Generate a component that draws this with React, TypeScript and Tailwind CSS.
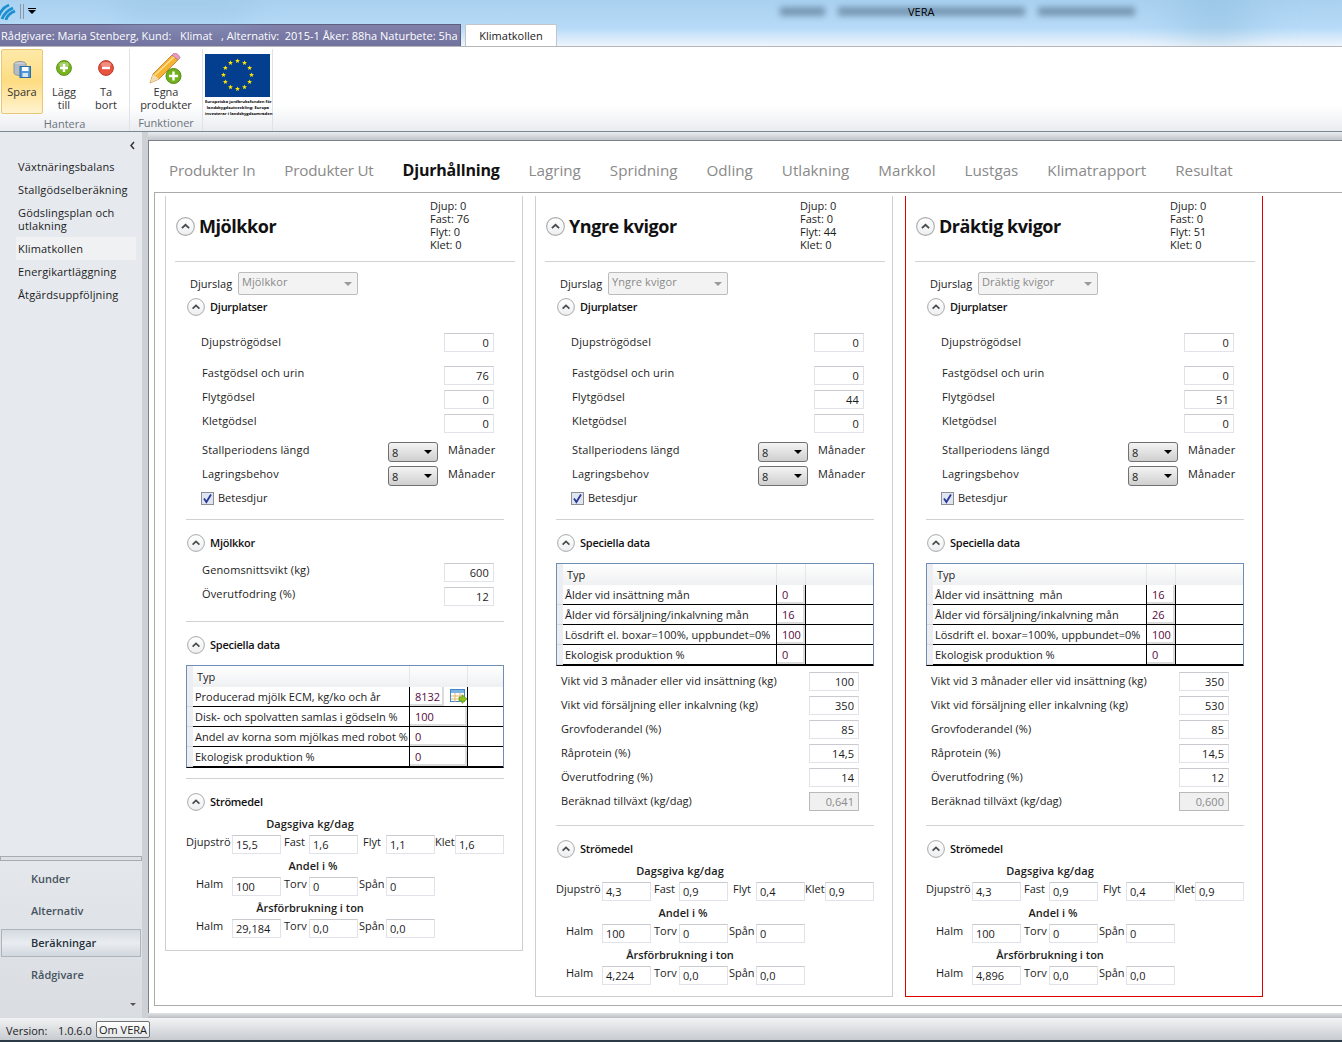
import type { ReactNode } from "react";

const Caret = ({ big = false }: { big?: boolean }) => (
  <svg width={big ? 19 : 18} height={big ? 19 : 18} viewBox="0 0 18 18" className="shrink-0">
    <defs>
      <linearGradient id="caretFill" x1="0" y1="0" x2="0" y2="1">
        <stop offset="0" stopColor="#ffffff" />
        <stop offset="1" stopColor="#eceef0" />
      </linearGradient>
    </defs>
    <circle cx="9" cy="9" r="8.4" fill="url(#caretFill)" stroke="#a9a9a9" strokeWidth="1" />
    <path d="M5.6 10.6 9 7.4l3.4 3.2" fill="none" stroke="#4a4a4a" strokeWidth="1.7" />
  </svg>
);

const Section = ({ title, className }: { title: string; className: string }) => (
  <div className={`flex items-center ml-[21px] h-[18px] ${className}`}>
    <Caret />
    <span className="ml-[5px] font-semibold text-[#111] tracking-[-0.25px]">{title}</span>
  </div>
);

const Line = ({ className }: { className: string }) => (
  <div className={`h-px ml-[20px] w-[318px] bg-[#d2d2d2] ${className}`}></div>
);

const NumBox = ({ value, disabled = false }: { value: string; disabled?: boolean }) => (
  <div
    className={
      disabled
        ? "w-[50px] h-[19px] shrink-0 pr-[4px] text-right leading-[17px] bg-[#f0f0f0] text-[#8a8a8a] border border-[#b9b9b9]"
        : "w-[50px] h-[19px] shrink-0 pr-[4px] text-right leading-[17px] bg-white border border-[#e2e3ea] border-t-[#c9cad0]"
    }
  >
    {value}
  </div>
);

const Field = ({ label, value, className, raised = false }: { label: string; value: string; className: string; raised?: boolean }) => (
  <div className={`flex items-center justify-between h-[19px] w-[293px] ml-[35px] tracking-[0.15px] ${className}`}>
    <span className={raised ? "mb-[4px] ml-px" : ""}>{label}</span>
    <NumBox value={value} />
  </div>
);

const Months = ({ label, className }: { label: string; className: string }) => (
  <div className={`flex items-center h-[20px] ml-[36px] tracking-[0.15px] ${className}`}>
    <span className="w-[186px] mb-[4px]">{label}</span>
    <div className="w-[50px] h-[20px] flex items-center justify-between pl-[3px] pr-[5px] rounded-[3px] border border-[#707070] bg-gradient-to-b from-[#f4f4f4] to-[#cfcfcf]">
      <span className="mt-[2px]">8</span>
      <span className="w-0 h-0 border-x-[4px] border-x-transparent border-t-[4px] border-t-black"></span>
    </div>
    <span className="ml-[10px] mb-[4px]">Månader</span>
  </div>
);

const Grid = () => (
  <svg width="17" height="15" viewBox="0 0 17 15" className="ml-[6px] shrink-0">
    <rect x="0.5" y="0.5" width="14" height="12" fill="#fff" stroke="#3f87c8" />
    <rect x="1" y="1" width="13" height="3" fill="#7db3e0" />
    <path d="M1 7h13M1 10h13M5 4v9M10 4v9" stroke="#e3b868" strokeWidth="1" />
    <path d="M9 8h3V5.6L17 10l-5 4.4V12H9z" fill="#8dc21f" stroke="#4f8a10" strokeWidth="0.6" />
  </svg>
);

type Row = { label: string; value: string; icon?: boolean };

const DataTable = ({ rows, col1, col2 }: { rows: Row[]; col1: string; col2: string }) => (
  <div className="mt-[11px] ml-[20px] w-[318px] h-[103px] border border-[#6f8db5] border-b-black">
    <div className="flex h-[21px] bg-gradient-to-b from-white to-[#eff0f2]">
      <div className="w-[6px] bg-[#eceef1]"></div>
      <div className={`${col1} pl-[4px] pt-[3px] border-r border-[#e4e6e8]`}>Typ</div>
      <div className={`${col2} border-r border-[#e4e6e8]`}></div>
    </div>
    {rows.map((r) => (
      <div key={r.label} className="flex h-[20px]">
        <div className="w-[6px] bg-[#eceef1] border-b border-[#d8d8d8]"></div>
        <div className={`${col1} pl-[2px] leading-[19px] whitespace-pre overflow-hidden border-r border-b border-black`}>{r.label}</div>
        <div className={`${col2} flex items-center border-r border-b border-black`}>
          <div className={`h-full pl-[5px] leading-[19px] text-[#560a3c] border-r-2 border-b-2 border-[#dcdcdc] ${r.icon ? "w-[34px]" : "w-full"}`}>
            {r.value}
          </div>
          {r.icon && <Grid />}
        </div>
        <div className="flex-1 border-b border-black"></div>
      </div>
    ))}
  </div>
);

const Box = ({ value }: { value: string }) => (
  <div className="w-[49px] h-[19px] shrink-0 pl-[3px] leading-[18px] bg-white border border-[#e2e3ea] border-t-[#c9cad0]">{value}</div>
);

const Lab = ({ text, className }: { text: string; className: string }) => (
  <span className={`h-[19px] leading-[13px] whitespace-nowrap shrink-0 ${className}`}>{text}</span>
);

const Stromedel = ({ day, share, ton }: { day: string[]; share: string[]; ton: string[] }) => (
  <div>
    <Section title="Strömedel" className="mt-[14px]" />
    <div className="mt-[5px] ml-[20px] w-[248px] h-[16px] leading-[16px] text-center font-semibold tracking-[0.1px]">Dagsgiva kg/dag</div>
    <div className="mt-[3px] ml-[20px] flex">
      <Lab text="Djupströ" className="w-[46px]" />
      <Box value={day[0]} />
      <Lab text="Fast" className="w-[28px] pl-[3px]" />
      <Box value={day[1]} />
      <Lab text="Flyt" className="w-[28px] pl-[5px]" />
      <Box value={day[2]} />
      <Lab text="Klet" className="w-[20px]" />
      <Box value={day[3]} />
    </div>
    <div className="mt-[4px] ml-[20px] w-[254px] h-[16px] leading-[16px] text-center font-semibold">Andel i %</div>
    <div className="mt-[3px] ml-[20px] flex">
      <Lab text="Halm" className="w-[46px] pl-[10px]" />
      <Box value={share[0]} />
      <Lab text="Torv" className="w-[28px] pl-[3px]" />
      <Box value={share[1]} />
      <Lab text="Spån" className="w-[28px] pl-[1px]" />
      <Box value={share[2]} />
    </div>
    <div className="mt-[4px] ml-[20px] w-[248px] h-[16px] leading-[16px] text-center font-semibold">Årsförbrukning i ton</div>
    <div className="mt-[3px] ml-[20px] flex">
      <Lab text="Halm" className="w-[46px] pl-[10px]" />
      <Box value={ton[0]} />
      <Lab text="Torv" className="w-[28px] pl-[3px]" />
      <Box value={ton[1]} />
      <Lab text="Spån" className="w-[28px] pl-[1px]" />
      <Box value={ton[2]} />
    </div>
  </div>
);

type CardProps = {
  title: string;
  stats: string[];
  places: string[];
  border: string;
  children: ReactNode;
};

const Card = ({ title, stats, places, border, children }: CardProps) => (
  <div className={`w-[358px] pb-[11px] border-x border-b ${border}`}>
    <div className="flex ml-[9px] w-[340px] h-[66px] border-b border-[#d2d2d2]">
      <div className="flex items-center mt-[20px] h-[20px] ml-px">
        <Caret big />
        <span className="ml-[4px] text-[18px] font-bold text-[#111] tracking-[-0.45px]">{title}</span>
      </div>
      <div className="ml-auto w-[85px] mt-[3px] leading-[13px]">
        {stats.map((s) => (
          <div key={s}>{s}</div>
        ))}
      </div>
    </div>
    <div className="flex items-center ml-[24px] mt-[10px] h-[23px]">
      <span className="w-[48px] mt-[1px]">Djurslag</span>
      <div className="w-[120px] h-[23px] flex justify-between pl-[3px] pr-[5px] rounded-[2px] bg-[#f3f3f3] text-[#8a8a8a] border border-[#bcbcbc]">
        <span className="leading-[17px] tracking-[0.1px]">{title}</span>
        <span className="mt-[9px] w-0 h-0 border-x-[4px] border-x-transparent border-t-[4px] border-t-[#9a9a9a]"></span>
      </div>
    </div>
    <Section title="Djurplatser" className="mt-[3px]" />
    <Field label="Djupströgödsel" value={places[0]} className="mt-[17px]" />
    <Field label="Fastgödsel och urin" value={places[1]} className="mt-[14px]" raised />
    <Field label="Flytgödsel" value={places[2]} className="mt-[5px]" raised />
    <Field label="Kletgödsel" value={places[3]} className="mt-[5px]" raised />
    <Months label="Stallperiodens längd" className="mt-[9px]" />
    <Months label="Lagringsbehov" className="mt-[4px]" />
    <div className="flex items-center h-[16px] mt-[4px] ml-[35px]">
      <svg width="13" height="13" viewBox="0 0 13 13">
        <rect x="0.5" y="0.5" width="12" height="12" fill="#dfe5f2" stroke="#8e8f8f" />
        <path d="M3 6.5 5.4 10 10 2.6" fill="none" stroke="#2b3a96" strokeWidth="1.8" />
      </svg>
      <span className="ml-[4px]">Betesdjur</span>
    </div>
    <Line className="mt-[13px]" />
    {children}
  </div>
);

const Vikt = ({ label, value, first = false, disabled = false }: { label: string; value: string; first?: boolean; disabled?: boolean }) => (
  <div className={`flex items-center justify-between h-[19px] w-[298px] ml-[25px] tracking-[0.05px] ${first ? "mt-[6px]" : "mt-[5px]"}`}>
    <span>{label}</span>
    <NumBox value={value} disabled={disabled} />
  </div>
);

const Heifers = ({ rows, weights }: { rows: Row[]; weights: string[] }) => (
  <>
    <Section title="Speciella data" className="mt-[14px]" />
    <DataTable rows={rows} col1="w-[214px]" col2="w-[29px]" />
    <Vikt first label="Vikt vid 3 månader eller vid insättning (kg)" value={weights[0]} />
    <Vikt label="Vikt vid försäljning eller inkalvning (kg)" value={weights[1]} />
    <Vikt label="Grovfoderandel (%)" value={weights[2]} />
    <Vikt label="Råprotein (%)" value={weights[3]} />
    <Vikt label="Överutfodring (%)" value={weights[4]} />
    <Vikt label="Beräknad tillväxt (kg/dag)" value={weights[5]} disabled />
    <Line className="mt-[14px]" />
  </>
);

const Sphere = ({ color, edge, plus }: { color: string; edge: string; plus: boolean }) => (
  <svg width="16" height="16" viewBox="0 0 16 16">
    <circle cx="8" cy="8" r="7.4" fill={color} stroke={edge} />
    <ellipse cx="8" cy="4.6" rx="5" ry="2.6" fill="#ffffff" opacity="0.35" />
    <path d={plus ? "M8 4v8M4 8h8" : "M4 8h8"} stroke="#fff" strokeWidth="2.4" />
  </svg>
);

const RibbonBtn = ({ label, icon }: { label: string; icon: ReactNode }) => (
  <div className="w-[42px] flex flex-col items-center pt-[11px] text-center leading-[13px]">
    <div className="h-[23px]">{icon}</div>
    <div className="mt-[2px] text-[#333] whitespace-pre-line">{label}</div>
  </div>
);

const starAt = (cx: number, cy: number, r: number) =>
  Array.from({ length: 10 }, (_, i) => {
    const a = -Math.PI / 2 + (i * Math.PI) / 5;
    const d = i % 2 === 0 ? r : r * 0.42;
    return `${cx + d * Math.cos(a)},${cy + d * Math.sin(a)}`;
  }).join(" ");

const EuFlag = () => (
  <svg width="65" height="43" viewBox="0 0 65 43">
    <rect width="65" height="43" fill="#033f8e" />
    {Array.from({ length: 12 }, (_, i) => {
      const a = (i * Math.PI) / 6;
      return <polygon key={i} points={starAt(32.5 + 14 * Math.sin(a), 21 - 14 * Math.cos(a), 2.6)} fill="#ffe500" />;
    })}
  </svg>
);

const navTop = ["Växtnäringsbalans", "Stallgödselberäkning"];
const navMid = ["Energikartläggning", "Åtgärdsuppföljning"];
const navLow = ["Kunder", "Alternativ", "Beräkningar", "Rådgivare"];
const tabs = ["Produkter In", "Produkter Ut", "Djurhållning", "Lagring", "Spridning", "Odling", "Utlakning", "Markkol", "Lustgas", "Klimatrapport", "Resultat"];

export default function App() {
  return (
    <div className="relative w-[1342px] h-[1042px] overflow-hidden flex flex-col bg-[#e6eaef] text-[11px] text-[#1c1c1c] font-['Open_Sans','Noto_Sans',sans-serif]">
      {/* window title area */}
      <div className="relative h-[47px] shrink-0 overflow-hidden border-b border-[#b4b6b9] bg-gradient-to-b from-[#a9d1ef] via-[#b6daf8] via-60% to-[#eef5fc]">
        <div className="absolute left-[1180px] top-[-10px] w-[70px] h-[50px] bg-[#7fb4d4] opacity-50 blur-xl"></div>
        <div className="absolute left-[120px] top-[-10px] w-[130px] h-[30px] bg-[#8fbfdd] opacity-40 blur-lg"></div>
        {/* the blurred window behind the glass */}
        <div className="absolute left-[780px] top-[7px] flex gap-[13px] opacity-50 blur-[3px]">
          <div className="w-[45px] h-[9px] bg-[#3c5872]"></div>
          <div className="w-[187px] h-[9px] bg-[#3c5872]"></div>
          <div className="w-[97px] h-[9px] bg-[#3c5872]"></div>
        </div>
        <div className="absolute left-[908px] top-[4px] text-[11px] leading-[15px] text-black">VERA</div>
        <div className="flex items-center h-[24px] pb-[2px]">
          <svg width="16" height="17" viewBox="0 0 16 17">
            <path d="M-2 15C0 9 4 4 9 2M2 16C4 11 8 7 13 5M6 17c1-4 4-7 9-9" fill="none" stroke="#1b8fd0" strokeWidth="2.8" />
          </svg>
          <div className="ml-[4px] w-[4px] h-[15px] border-x border-[#8a97a5]"></div>
          <div className="ml-[4px] flex flex-col items-center gap-[1px]">
            <div className="w-[8px] h-px bg-black"></div>
            <div className="w-0 h-0 border-x-[4px] border-x-transparent border-t-[4px] border-t-black"></div>
          </div>
        </div>
        <div className="flex h-[23px]">
          <div className="w-[461px] pl-[1px] border-t border-r border-[#5f5f7e] bg-gradient-to-b from-[#8080aa] to-[#72729f] text-[11px] leading-[22px] text-white whitespace-pre overflow-hidden">
            Rådgivare: Maria Stenberg, Kund:   Klimat   , Alternativ:  2015-1 Åker: 88ha Naturbete: 5ha
          </div>
          <div className="ml-[4px] w-[92px] h-[24px] z-10 text-center leading-[21px] bg-white text-[#222] border-x border-t border-[#c2c5c9] rounded-t-[2px]">
            Klimatkollen
          </div>
        </div>
      </div>

      {/* ribbon */}
      <div className="flex h-[85px] shrink-0 pt-[2px] border-b border-[#7f8790] bg-gradient-to-b from-white via-white via-70% to-[#e9ecf0]">
        <div className="w-[130px] flex flex-col border-r border-[#dfe2e6]">
          <div className="flex flex-1 pl-[1px]">
            <div className="w-[42px] h-[65px] flex flex-col items-center pt-[8px] leading-[13px] rounded-[2px] border border-[#e8c877] bg-gradient-to-b from-[#fde9a8] via-[#fddc82] to-[#fff3cf]">
              <svg width="18" height="18" viewBox="0 0 18 18" className="h-[23px]">
                <ellipse cx="7" cy="3.5" rx="6" ry="2.5" fill="#c9ced3" stroke="#8f969c" />
                <path d="M1 3.5v9c0 1.4 2.7 2.5 6 2.5s6-1.1 6-2.5v-9" fill="#b5bbc2" stroke="#8f969c" />
                <rect x="7" y="6" width="10.5" height="11" fill="#4f97d6" stroke="#2a6ea8" />
                <rect x="9" y="6.5" width="6.5" height="4" fill="#fff" />
                <rect x="9.5" y="12.5" width="5.5" height="4" fill="#d6e6f3" />
              </svg>
              <div className="mt-[4px] text-[#333]">Spara</div>
            </div>
            <RibbonBtn label={"Lägg\ntill"} icon={<Sphere color="#7ab51d" edge="#5a8f14" plus />} />
            <RibbonBtn label={"Ta\nbort"} icon={<Sphere color="#e8523f" edge="#b83b2c" plus={false} />} />
          </div>
          <div className="h-[18px] text-center leading-[20px] text-[#6c737c]">Hantera</div>
        </div>
        <div className="w-[73px] flex flex-col border-r border-[#dfe2e6]">
          <div className="flex-1 flex flex-col items-center pt-[4px] leading-[13px]">
            <svg width="34" height="32" viewBox="0 0 34 32">
              <path d="M1 30 4 21 23 2l6 5-19 19z" fill="#f6b233" stroke="#b9791c" strokeWidth="0.8" />
              <path d="M1 30 4 21l6 5z" fill="#f3dcb2" />
              <path d="M23 2l6 5 2-2c1-1-4-6-6-5z" fill="#e79ac0" stroke="#a86f8c" strokeWidth="0.6" />
              <path d="M6 22 25 4" stroke="#fbe08f" strokeWidth="1.6" />
              <circle cx="24.5" cy="23" r="7.5" fill="#72b01c" stroke="#4f8a10" />
              <path d="M24.5 18.5v9M20 23h9" stroke="#fff" strokeWidth="2.4" />
            </svg>
            <div className="text-center text-[#333]">
              Egna
              <br />
              produkter
            </div>
          </div>
          <div className="h-[18px] text-center leading-[20px] text-[#6c737c]">Funktioner</div>
        </div>
        <div className="w-[70px] pl-[2px] pt-[5px] border-r border-[#dfe2e6]">
          <EuFlag />
          <div className="w-[66px] mt-[2px] text-[4.2px] leading-[6px] font-bold text-black text-center whitespace-nowrap">
            Europeiska jordbruksfonden för
            <br />
            landsbygdsutveckling: Europa
            <br />
            investerar i landsbygdsområden
          </div>
        </div>
      </div>

      <div className="flex flex-1 min-h-0">
        {/* sidebar */}
        <div className="w-[148px] shrink-0 flex">
          <div className="w-[142px] flex flex-col">
            <div className="h-[26px] flex justify-end items-center pr-[6px] pt-[1px]">
              <svg width="7" height="9" viewBox="0 0 7 9">
                <path d="M5 1 2 4.5 5 8" fill="none" stroke="#333" strokeWidth="1.5" />
              </svg>
            </div>
            <div className="ml-[18px] tracking-[0.15px]">
              {navTop.map((n) => (
                <div key={n} className="h-[23px] leading-[18px]">{n}</div>
              ))}
              <div className="h-[26px] pt-[2px] leading-[13px]">
                Gödslingsplan och
                <br />
                utlakning
              </div>
            </div>
            <div className="mt-[7px] ml-[16px] w-[120px] h-[23px] pl-[2px] leading-[23px] tracking-[0.15px] bg-[#eff1f3]">Klimatkollen</div>
            <div className="ml-[18px] tracking-[0.15px]">
              {navMid.map((n) => (
                <div key={n} className="h-[23px] leading-[24px]">{n}</div>
              ))}
            </div>
            <div className="mt-[550px] h-[5px] border border-[#a7acb2] bg-[#dde1e6]"></div>
            <div className="flex-1 pt-[2px] bg-gradient-to-b from-[#e4e7eb] to-[#d9dde2]">
              {navLow.map((n) => (
                <div
                  key={n}
                  className={
                    n === "Beräkningar"
                      ? "h-[28px] mx-[1px] my-[2px] pl-[29px] leading-[26px] font-semibold text-[#27313d] border border-[#aeb4bb] bg-gradient-to-b from-[#d5dae1] via-[#e9edf1] to-[#d2d7de]"
                      : "h-[32px] pl-[31px] leading-[31px] font-semibold text-[#47535f]"
                  }
                >
                  {n}
                </div>
              ))}
              <div className="mt-[12px] mr-[6px] ml-auto w-0 h-0 border-x-[3px] border-x-transparent border-t-[3px] border-t-[#555]"></div>
            </div>
          </div>
          <div className="w-[6px] bg-[#cdd1d6]"></div>
        </div>

        {/* content */}
        <div className="flex-1 flex flex-col min-w-0">
          <div className="h-[8px] bg-gradient-to-b from-[#e9ecf0] to-[#c2c6cb]"></div>
          <div className="h-[873px] bg-white border-l border-t border-[#7c8289]">
            <div className="flex gap-[29px] h-[51px] pl-[20px] pt-[17px] text-[15.2px] leading-[24px] text-[#8a8a8a] whitespace-nowrap">
              {tabs.map((t) => (
                <span
                  key={t}
                  className={
                    t === "Djurhållning"
                      ? "text-[16px] font-bold text-[#111] tracking-[-0.2px]"
                      : t.startsWith("Produkter")
                        ? "tracking-[-0.2px]"
                        : ""
                  }
                >
                  {t}
                </span>
              ))}
            </div>
            <div className="ml-[5px] h-[814px] pt-[3px] pl-[10px] flex items-start gap-[12px] border-l border-t border-b border-[#ababab] overflow-hidden">
              <Card
                title="Mjölkkor"
                stats={["Djup: 0", "Fast: 76", "Flyt: 0", "Klet: 0"]}
                places={["0", "76", "0", "0"]}
                border="border-[#cfcfcf]"
              >
                <Section title="Mjölkkor" className="mt-[14px]" />
                <Field label="Genomsnittsvikt (kg)" value="600" className="mt-[11px]" raised />
                <Field label="Överutfodring (%)" value="12" className="mt-[5px]" raised />
                <Line className="mt-[15px]" />
                <Section title="Speciella data" className="mt-[14px]" />
                <DataTable
                  col1="w-[217px]"
                  col2="w-[58px]"
                  rows={[
                    { label: "Producerad mjölk ECM, kg/ko och år", value: "8132", icon: true },
                    { label: "Disk- och spolvatten samlas i gödseln %", value: "100" },
                    { label: "Andel av korna som mjölkas med robot %", value: "0" },
                    { label: "Ekologisk produktion %", value: "0" },
                  ]}
                />
                <Line className="mt-[10px]" />
                <Stromedel day={["15,5", "1,6", "1,1", "1,6"]} share={["100", "0", "0"]} ton={["29,184", "0,0", "0,0"]} />
                <div className="h-px"></div>
              </Card>
              <Card
                title="Yngre kvigor"
                stats={["Djup: 0", "Fast: 0", "Flyt: 44", "Klet: 0"]}
                places={["0", "0", "44", "0"]}
                border="border-[#cfcfcf]"
              >
                <Heifers
                  rows={[
                    { label: "Ålder vid insättning mån", value: "0" },
                    { label: "Ålder vid försäljning/inkalvning mån", value: "16" },
                    { label: "Lösdrift el. boxar=100%, uppbundet=0%", value: "100" },
                    { label: "Ekologisk produktion %", value: "0" },
                  ]}
                  weights={["100", "350", "85", "14,5", "14", "0,641"]}
                />
                <Stromedel day={["4,3", "0,9", "0,4", "0,9"]} share={["100", "0", "0"]} ton={["4,224", "0,0", "0,0"]} />
              </Card>
              <Card
                title="Dräktig kvigor"
                stats={["Djup: 0", "Fast: 0", "Flyt: 51", "Klet: 0"]}
                places={["0", "0", "51", "0"]}
                border="border-[#e00000]"
              >
                <Heifers
                  rows={[
                    { label: "Ålder vid insättning  mån", value: "16" },
                    { label: "Ålder vid försäljning/inkalvning mån", value: "26" },
                    { label: "Lösdrift el. boxar=100%, uppbundet=0%", value: "100" },
                    { label: "Ekologisk produktion %", value: "0" },
                  ]}
                  weights={["350", "530", "85", "14,5", "12", "0,600"]}
                />
                <Stromedel day={["4,3", "0,9", "0,4", "0,9"]} share={["100", "0", "0"]} ton={["4,896", "0,0", "0,0"]} />
              </Card>
            </div>
          </div>
          <div className="flex-1 bg-gradient-to-b from-[#e0e2e5] to-[#b9bdc2]"></div>
        </div>
      </div>

      {/* status bar */}
      <div className="flex items-center h-[24px] shrink-0 pl-[6px] border-b-2 border-[#2c3a48] bg-gradient-to-b from-[#f2f3f4] to-[#c8ccd1]">
        <span className="w-[52px] mt-[5px]">Version:</span>
        <span className="w-[38px] mt-[5px]">1.0.6.0</span>
        <div className="w-[54px] h-[17px] text-center leading-[15px] rounded-[2px] border border-[#6f7378] bg-gradient-to-b from-white to-[#e4e6e8]">Om VERA</div>
      </div>
    </div>
  );
}
